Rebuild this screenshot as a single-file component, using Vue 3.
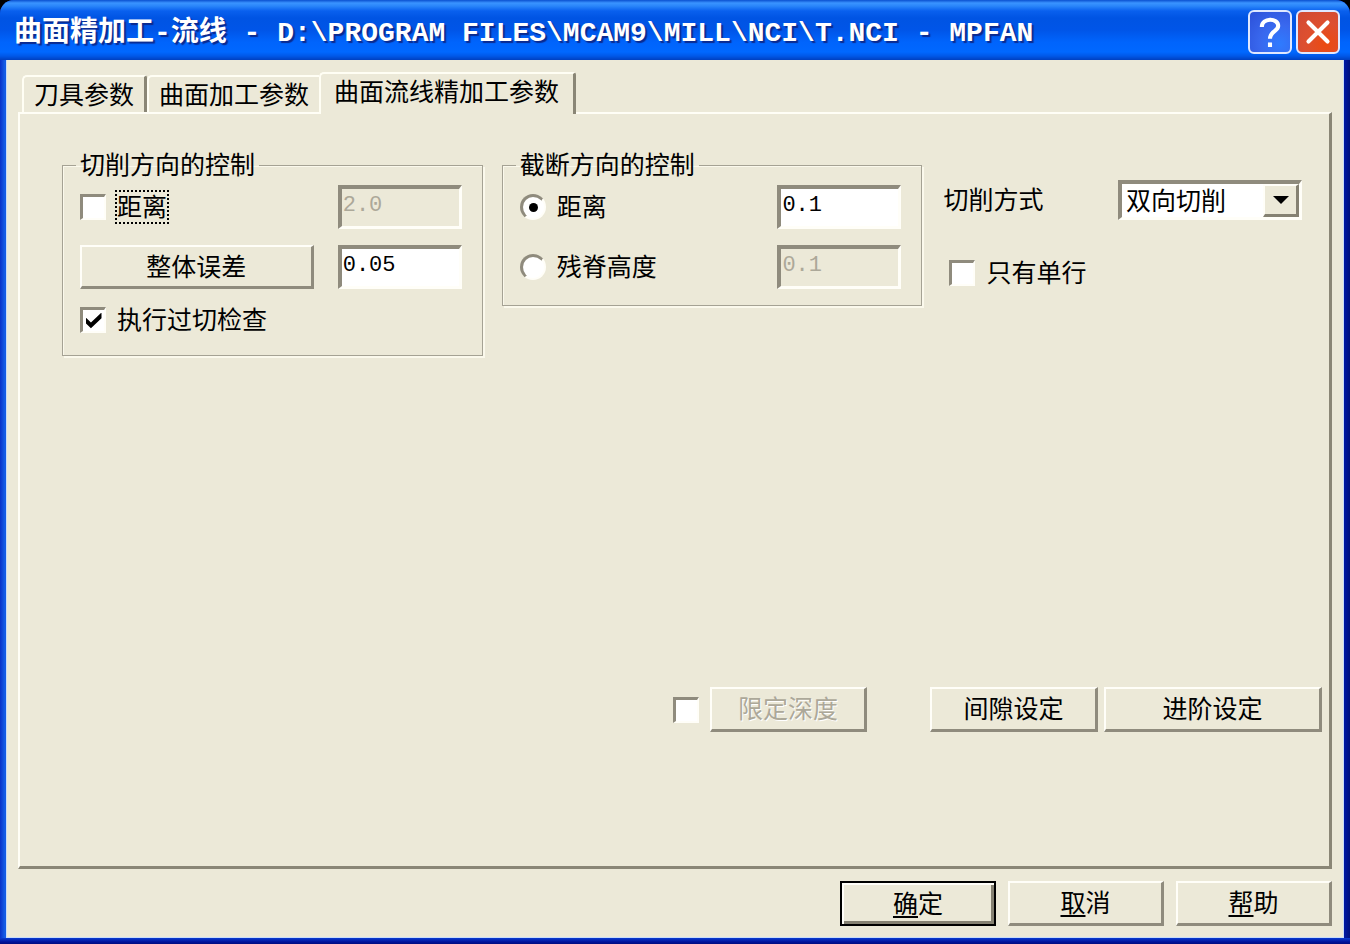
<script setup>
import { ref } from 'vue'

const tabs = ['刀具参数', '曲面加工参数', '曲面流线精加工参数']
const active = ref(2)
const useCutDistance = ref(false)
const cutDistance = ref('2.0')
const tolerance = ref('0.05')
const gougeCheck = ref(true)
const stepMode = ref('distance')
const stepDistance = ref('0.1')
const scallop = ref('0.1')
const cutMethod = ref('双向切削')
const singleRow = ref(false)
const limitDepth = ref(false)
</script>

<template>
  <main class="window">
    <header class="titlebar">
      <h1 class="title">曲面精加工-流线 - D:\PROGRAM FILES\MCAM9\MILL\NCI\T.NCI - MPFAN</h1>
      <button class="cap help" type="button" aria-label="帮助">
        <svg viewBox="0 0 44 44" aria-hidden="true">
          <path d="M13 16.500C13 6 31 6 31 15.500C31 21.500 22 21 22 29.500" />
          <path d="M22 33.500v5" />
        </svg>
      </button>
      <button class="cap close" type="button" aria-label="关闭">
        <svg viewBox="0 0 44 44" aria-hidden="true">
          <path d="M11.500 11.500L32.500 32.500M32.500 11.500L11.500 32.500" />
        </svg>
      </button>
    </header>

    <div class="body">
      <div class="tabs" role="tablist">
        <button
          v-for="(t, i) in tabs"
          :key="t"
          type="button"
          role="tab"
          class="tab"
          :class="{ active: i === active, before: i === active - 1 }"
          :aria-selected="i === active"
          @click="active = i"
        >{{ t }}</button>
      </div>

      <section class="panel">
        <div class="columns">
          <fieldset class="group">
            <legend>切削方向的控制</legend>
            <div class="row">
              <label class="option"><input v-model="useCutDistance" type="checkbox" class="check" /><span class="focus">距离</span></label>
              <input v-model="cutDistance" class="field" type="text" aria-label="切削方向距离" :disabled="!useCutDistance" />
            </div>
            <div class="row">
              <button class="btn grow" type="button">整体误差</button>
              <input v-model="tolerance" class="field" type="text" aria-label="整体误差" />
            </div>
            <label class="option"><input v-model="gougeCheck" type="checkbox" class="check" /><span>执行过切检查</span></label>
          </fieldset>

          <fieldset class="group second">
            <legend>截断方向的控制</legend>
            <div class="row">
              <label class="option"><input v-model="stepMode" type="radio" name="step" value="distance" class="radio" /><span>距离</span></label>
              <input v-model="stepDistance" class="field" type="text" aria-label="截断方向距离" :disabled="stepMode !== 'distance'" />
            </div>
            <div class="row">
              <label class="option"><input v-model="stepMode" type="radio" name="step" value="scallop" class="radio" /><span>残脊高度</span></label>
              <input v-model="scallop" class="field" type="text" aria-label="残脊高度" :disabled="stepMode !== 'scallop'" />
            </div>
          </fieldset>

          <div class="side">
            <div class="method">
              <label class="caption" for="method">切削方式</label>
              <span class="combo">
                <select id="method" v-model="cutMethod">
                  <option>双向切削</option>
                  <option>单向切削</option>
                </select>
                <span class="arrow" aria-hidden="true"></span>
              </span>
            </div>
            <label class="option single"><input v-model="singleRow" type="checkbox" class="check" /><span>只有单行</span></label>
          </div>
        </div>

        <div class="actions">
          <input v-model="limitDepth" type="checkbox" class="check" aria-label="限定深度" />
          <button class="btn depth" type="button" :disabled="!limitDepth">限定深度</button>
          <button class="btn gap" type="button">间隙设定</button>
          <button class="btn advanced" type="button">进阶设定</button>
        </div>
      </section>

      <footer class="footer">
        <button class="btn default" type="button"><u>确</u>定</button>
        <button class="btn" type="button"><u>取</u>消</button>
        <button class="btn" type="button"><u>帮</u>助</button>
      </footer>
    </div>
  </main>
</template>

<style>
html,
body {
  margin: 0;
  background: #000;
}
</style>

<style scoped>
.window,
.window * {
  box-sizing: border-box;
}
.window {
  display: flex;
  flex-direction: column;
  min-height: 100vh;
  padding: 0 6px 6px;
  border-radius: 14px 14px 0 0;
  background:
    linear-gradient(180deg, #0a3cd0, #00129a 4px, #000c80) bottom / 100% 6px no-repeat,
    linear-gradient(90deg, #0831c8 0, #1660e8 5px, #0a46dc 8px, #0018a0 calc(100% - 5px), #00107c 100%);
  font-family: "Noto Sans CJK SC", sans-serif;
  font-size: 25px;
  line-height: 30px;
  color: #000;
  overflow: hidden;
}
.titlebar {
  display: flex;
  align-items: center;
  gap: 4px;
  height: 60px;
  margin: 0 -6px;
  padding: 4px 10px 0 14px;
  background: linear-gradient(180deg, #0a50d0 0, #3a94ff 3px, #2a86fa 6px, #0960ee 11px, #0054e3 18px, #0055e8 30px, #0064fc 42px, #0068ff 52px, #0058e8 56px, #0040c0 60px);
}
.title {
  flex: 1;
  margin: 0;
  padding-top: 4px;
  font-family: "Liberation Mono", "Noto Sans CJK SC", monospace;
  font-size: 28px;
  line-height: 36px;
  font-weight: 700;
  color: #fff;
  white-space: nowrap;
  text-shadow: 2px 2px 1px #0a2a90;
}
.cap {
  width: 44px;
  height: 44px;
  padding: 0;
  border: 2px solid #dfe8ff;
  border-radius: 6px;
}
.cap svg {
  display: block;
  width: 40px;
  height: 40px;
  fill: none;
  stroke: #fff;
  stroke-width: 4.5;
}
.help {
  background: radial-gradient(circle at 75% 80%, #2f7bff 0, #3968ee 45%, #2c50d8 100%);
}
.close {
  background: radial-gradient(circle at 70% 80%, #ec4a10 0, #dd4f30 50%, #cf4a34 100%);
}
.close svg {
  stroke-linecap: round;
}
.body {
  flex: 1;
  display: flex;
  flex-direction: column;
  padding: 12px;
  background: #ece9d8;
  box-shadow: inset 1px 0 0 #c8dcfa, inset -1px -1px 0 #c8dcfa;
}
.tabs {
  position: relative;
  display: flex;
  align-items: flex-end;
  height: 42px;
  margin-bottom: -2px;
  padding-left: 4px;
}
.tab {
  height: 37px;
  margin: 0 0 2px;
  padding: 0 10px 4px;
  border: solid #fffef4;
  border-width: 2px 0 0 2px;
  border-radius: 5px 0 0 0;
  background: #ece9d8;
  font: inherit;
  color: inherit;
  white-space: nowrap;
}
.tab:not(.before) {
  border-right: 3px solid #8a8676;
  border-radius: 5px 3px 0 0;
}
.tab.active {
  height: 42px;
  margin: 0;
  padding: 0 14px 8px 13px;
}
.panel {
  flex: 1;
  display: flex;
  flex-direction: column;
  justify-content: space-between;
  gap: 40px;
  padding: 36px 7px 134px 42px;
  border: solid;
  border-width: 2px 3px 3px 2px;
  border-color: #fffef6 #8a8676 #8a8676 #fffef6;
}
.columns {
  display: grid;
  grid-template-columns: 420fr 420fr 360fr;
  column-gap: 19px;
  align-items: start;
  margin-right: 20px;
}
.group {
  display: flex;
  flex-direction: column;
  gap: 16px;
  min-width: 0;
  margin: 0;
  padding: 5px 20px 20px 17px;
  border: 1px solid #a5a294;
  box-shadow: 2px 2px 0 #fbf9ec, inset 1px 1px 0 #fbf9ec;
}
.second {
  padding-bottom: 16px;
}
legend {
  margin-left: -4px;
  padding: 0 4px 4px;
  line-height: 26px;
}
.row {
  display: flex;
  align-items: center;
  justify-content: space-between;
  gap: 24px;
}
.option {
  display: flex;
  align-items: center;
  gap: 11px;
  white-space: nowrap;
}
.option span,
.caption {
  padding-bottom: 4px;
  line-height: 26px;
}
.focus {
  outline: 2px dotted #000;
}
.check,
.radio {
  appearance: none;
  flex: none;
  display: grid;
  place-items: center;
  width: 26px;
  height: 26px;
  margin: 0;
  border: solid;
  border-width: 3px 2px 2px 3px;
  border-color: #8f8b7d #fffef8 #fffef8 #8f8b7d;
  background: #fff;
}
.check:checked::after {
  content: "";
  width: 16px;
  height: 16px;
  background: #000;
  clip-path: polygon(0 30%, 34% 62%, 100% 0, 100% 36%, 34% 98%, 0 66%);
}
.radio {
  border-radius: 50%;
}
.radio:checked::after {
  content: "";
  width: 9px;
  height: 9px;
  border-radius: 50%;
  background: #000;
}
.field {
  flex: none;
  width: 124px;
  height: 44px;
  padding: 0 1px 4px;
  border: solid;
  border-width: 4px 3px 3px 4px;
  border-color: #8f8b7d #fffef8 #fffef8 #8f8b7d;
  border-radius: 0;
  background: #fff;
  font-family: "Liberation Mono", monospace;
  font-size: 22px;
  color: #000;
}
.field:disabled {
  background: #ece9d8;
  color: #aca899;
}
.btn {
  height: 45px;
  padding: 0 4px 4px;
  border: solid;
  border-width: 2px 3px 3px 2px;
  border-color: #fffef8 #8f8b7d #8f8b7d #fffef8;
  border-radius: 0;
  background: #ece9d8;
  font: inherit;
  color: #000;
  white-space: nowrap;
}
.btn:disabled {
  color: #aca899;
  text-shadow: 1px 1px 0 #fff;
}
.row .btn {
  height: 44px;
}
.grow {
  flex: 1;
}
.side {
  display: flex;
  flex-direction: column;
  gap: 38px;
  padding: 30px 0 0 2px;
}
.method {
  display: flex;
  align-items: center;
  justify-content: space-between;
}
.combo {
  position: relative;
  width: 184px;
}
select {
  appearance: none;
  display: block;
  width: 100%;
  height: 40px;
  padding: 0 36px 4px 4px;
  border: solid;
  border-width: 4px 3px 3px 4px;
  border-color: #8f8b7d #fffef8 #fffef8 #8f8b7d;
  border-radius: 0;
  background: #fff;
  font: inherit;
  line-height: 28px;
  color: #000;
}
.arrow {
  position: absolute;
  top: 4px;
  right: 3px;
  display: grid;
  place-items: center;
  width: 36px;
  height: 33px;
  border: solid;
  border-width: 2px 3px 3px 2px;
  border-color: #fffef8 #858172 #858172 #fffef8;
  background: #ece9d8;
  pointer-events: none;
}
.arrow::after {
  content: "";
  border: solid transparent;
  border-width: 8px 8px 0;
  border-top-color: #000;
}
.single {
  padding-left: 6px;
}
.actions {
  display: flex;
  align-items: center;
  justify-content: flex-end;
}
.depth {
  width: 157px;
  margin: 0 63px 0 11px;
}
.gap {
  width: 168px;
  margin-right: 6px;
}
.advanced {
  width: 218px;
}
.footer {
  display: flex;
  justify-content: flex-end;
  gap: 12px;
  margin-top: 12px;
}
.footer .btn {
  width: 156px;
}
.footer .default {
  border: 2px solid #000;
  box-shadow: inset 2px 2px 0 #fffef8, inset -3px -3px 0 #858172;
}
u {
  text-underline-offset: 3px;
  text-decoration-thickness: 2px;
}
</style>
